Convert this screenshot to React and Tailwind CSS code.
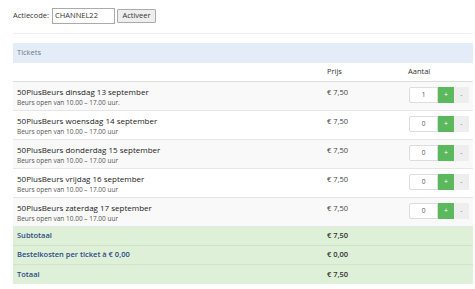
import React from "react";

const days = [
  { t: "50PlusBeurs dinsdag 13 september", s: "Beurs open van 10.00 – 17.00 uur.", q: "1" },
  { t: "50PlusBeurs woensdag 14 september", s: "Beurs open van 10.00 – 17.00 uur", q: "0" },
  { t: "50PlusBeurs donderdag 15 september", s: "Beurs open van 10.00 – 17.00 uur", q: "0" },
  { t: "50PlusBeurs vrijdag 16 september", s: "Beurs open van 10.00 – 17.00 uur", q: "0" },
  { t: "50PlusBeurs zaterdag 17 september", s: "Beurs open van 10.00 – 17.00 uur", q: "0" },
];

const sums = [
  ["Subtotaal", "€ 7,50"],
  ["Bestelkosten per ticket à € 0,00", "€ 0,00"],
  ["Totaal", "€ 7,50"],
];

export default function App() {
  return (
    <div className="w-[475px] h-[289px] bg-white overflow-hidden" style={{ fontFamily: '"Open Sans", sans-serif' }}>
      <div className="pl-[13px] pr-[2px] pt-[8px]">
        <div className="flex items-center h-[16px] text-[7.5px] text-[#333]">
          <span>Actiecode:</span>
          <div className="ml-[3px] w-[63px] h-[16px] border border-[#aaa] flex items-center px-[2px] text-[7.5px] text-[#333]">CHANNEL22</div>
          <div className="ml-[2px] w-[39px] h-[14px] border border-[#aaa] bg-[#eee] flex items-center justify-center text-[7.5px] text-[#333] rounded-[1px]">Activeer</div>
        </div>
        <div className="mt-[9px] h-px bg-[#f0f0f0]" />
        <div className="mt-[9px] h-[20px] bg-[#e4ecf7] flex items-center pl-[4px] text-[7.5px] text-[#6c7a89]">Tickets</div>
        <div className="grid grid-cols-[310px_81px_1fr] h-[19px] items-center text-[7.5px] text-[#333] border-b border-[#ddd]">
          <div />
          <div className="pl-[4px]">Prijs</div>
          <div className="pl-[4px]">Aantal</div>
        </div>
        {days.map((d, i) => (
          <div key={i} className={`grid grid-cols-[310px_81px_1fr] h-[29px] border-b border-[#e6e6e6] ${i % 2 === 0 ? "bg-[#f9f9f9]" : "bg-white"}`}>
            <div className="pl-[4px] pt-[4px]">
              <div className="text-[8px] leading-[12px] text-[#222]">{d.t}</div>
              <div className="text-[6.5px] leading-[10px] text-[#555]">{d.s}</div>
            </div>
            <div className="pl-[4px] pt-[4px] text-[7.5px] leading-[12px] text-[#444]">€ 7,50</div>
            <div className="pl-[5px] pt-[5px]">
              <div className="flex h-[16px]">
                <div className="w-[29px] h-[16px] bg-white border border-[#ddd] rounded-l-[2px] flex items-center justify-center text-[6.5px] text-[#555]">{d.q}</div>
                <div className="w-[16px] h-[16px] bg-[#5cb85c] flex items-center justify-center text-[7px] text-white">+</div>
                <div className="w-[15px] h-[16px] bg-[#eeeeee] flex items-center justify-center text-[7px] text-[#888]">-</div>
              </div>
            </div>
          </div>
        ))}
        {sums.map((s, i) => (
          <div key={i} className={`grid grid-cols-[310px_81px_1fr] h-[19px] items-center bg-[#dff0d8] text-[7.5px] font-semibold text-[#2b4a86] ${i < 2 ? "border-b border-[#d0e4c8]" : ""}`}>
            <div className="pl-[4px]">{s[0]}</div>
            <div className="pl-[4px] text-[#333]">{s[1]}</div>
            <div />
          </div>
        ))}
      </div>
    </div>
  );
}
